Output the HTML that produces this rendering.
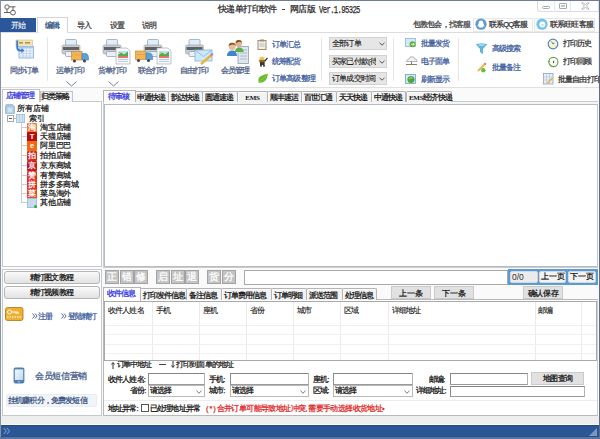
<!DOCTYPE html>
<html><head><meta charset="utf-8">
<style>
*{box-sizing:border-box;margin:0;padding:0}
html,body{width:600px;height:439px;overflow:hidden;background:#fff}
body{position:relative;font-family:"Liberation Sans",sans-serif;font-size:7.5px;color:#111;line-height:1}
.a{position:absolute}
.t{position:absolute;white-space:nowrap;line-height:10px;font-size:7.5px;letter-spacing:-0.85px;-webkit-text-stroke-width:0.25px}
</style></head><body>
<div class="a" style="left:0px;top:0px;width:600px;height:439px;background:#fff"></div>
<div class="a" style="left:0px;top:0px;width:600px;height:1px;background:#6f7d96"></div>
<div class="a" style="left:0px;top:0px;width:1px;height:439px;background:#8593a5"></div>
<div class="a" style="left:599px;top:0px;width:1px;height:439px;background:#5d6d8a"></div>
<div class="a" style="left:598px;top:1px;width:1px;height:436px;background:#eef3f8"></div>
<svg class="a" style="left:3px;top:3px" width="14" height="13" viewBox="0 0 14 13">
 <g fill="none" stroke="#606060" stroke-width="1">
  <circle cx="4" cy="4" r="2.2"/><circle cx="10" cy="9.6" r="2.4"/>
  <path d="M6.2 3.8H12.5M10 3.8V7.2M4 6.2V9.5H7.6M1 9.5H4"/>
 </g></svg>
<div class="t" style="left:218px;top:4px;font-size:9px;letter-spacing:-0.6px;color:#2a2a2a">快递单打印软件</div>
<div class="a" style="left:282px;top:9px;width:3px;height:1px;background:#444"></div>
<div class="t" style="left:290px;top:4px;font-size:9px;letter-spacing:-0.6px;color:#2a2a2a">网店版</div>
<div class="t" style="left:319px;top:5px;font-size:10px;font-family:'Liberation Mono',monospace;transform:scaleX(0.72);transform-origin:0 0;color:#2a2a2a;line-height:12px">Ver.1.95325</div>
<div class="a" style="left:537px;top:1px;width:62px;height:11px;border:1px solid #d9dde3;border-top:none;border-radius:0 0 0 3px;background:#fff"></div>
<div class="a" style="left:554px;top:1px;width:1px;height:11px;background:#e4e7eb"></div>
<div class="a" style="left:570px;top:1px;width:1px;height:11px;background:#e4e7eb"></div>
<div class="a" style="left:542px;top:6px;width:8px;height:3px;border:1px solid #a4a9b2;border-radius:1.5px"></div>
<div class="a" style="left:559px;top:3px;width:8px;height:6px;border:1px solid #a4a9b2;border-radius:1px"></div>
<div class="a" style="left:561px;top:5px;width:4px;height:2px;border:1px solid #c0c4ca"></div>
<svg class="a" style="left:581px;top:2px" width="9" height="8" viewBox="0 0 9 8"><path d="M.8 .8H2.6L4.5 3L6.4 .8H8.2L5.6 4L8.2 7.2H6.4L4.5 5L2.6 7.2H.8L3.4 4Z" fill="#fff" stroke="#a4a9b2" stroke-width=".8"/></svg>
<div class="a" style="left:0px;top:18px;width:36px;height:14px;background:#2b579a"></div>
<div class="t" style="left:11px;top:21px;color:#fff;-webkit-text-stroke-width:0.1px">开始</div>
<div class="a" style="left:37px;top:17px;width:31px;height:16px;background:#fff;border:1px solid #d4d4d4;border-bottom:none"></div>
<div class="t" style="left:45px;top:21px;color:#2f4f80">编辑</div>
<div class="t" style="left:77px;top:21px;color:#444">导入</div>
<div class="t" style="left:110px;top:21px;color:#444">设置</div>
<div class="t" style="left:142px;top:21px;color:#444">说明</div>
<div class="a" style="left:1px;top:32px;width:36px;height:1px;background:#dcdcdc"></div>
<div class="a" style="left:68px;top:32px;width:531px;height:1px;background:#dcdcdc"></div>
<div class="t" style="left:413px;top:20px;color:#444">包教包会，找客服</div>
<div class="a" style="left:473px;top:18px;width:60px;height:14px;border:1px solid #e8e8e8;background:#fcfcfc"></div>
<svg class="a" style="left:475px;top:18px" width="13" height="13" viewBox="0 0 13 13"><circle cx="6" cy="6.2" r="5.6" fill="#5b9ad6"/><path d="M6 2.6Q8.3 2.6 8.4 5.4Q9.6 7.2 9.4 8.6Q8.8 8.4 8.4 7.8Q8.6 9.2 7.6 9.6H4.4Q3.4 9.2 3.6 7.8Q3.2 8.4 2.6 8.6Q2.4 7.2 3.6 5.4Q3.7 2.6 6 2.6Z" fill="#fff"/></svg>
<div class="t" style="left:489px;top:20px;color:#333">联系QQ客服</div>
<div class="a" style="left:534px;top:18px;width:61px;height:14px;border:1px solid #e8e8e8;background:#fcfcfc"></div>
<svg class="a" style="left:536px;top:18px" width="13" height="13" viewBox="0 0 13 13"><circle cx="6" cy="6.2" r="5.6" fill="#72c4ea"/><circle cx="6.4" cy="6.6" r="3" fill="#fff"/><circle cx="6.6" cy="6.8" r="1.1" fill="#a8dcf4"/></svg>
<div class="t" style="left:550px;top:20px;color:#333">联系旺旺客服</div>
<svg width="0" height="0" style="position:absolute"><defs>
 <g id="prn">
  <rect x="3.5" y="0.5" width="11" height="7" rx="1" fill="#dfeefa" stroke="#9aa6b4" stroke-width=".8"/>
  <rect x="0" y="6" width="18" height="9" rx="1.5" fill="#c9cccf" stroke="#9c9fa3" stroke-width=".6"/>
  <rect x="1" y="8" width="16" height="3" fill="#5f6266"/>
  <rect x="3.5" y="12.5" width="11" height="5" rx="1" fill="#e6f1fb" stroke="#8f9aa8" stroke-width=".7"/>
 </g>
 <g id="truck">
  <rect x="0" y="0" width="10.5" height="8.5" fill="#f2b458" stroke="#cf8a2a" stroke-width=".7"/>
  <path d="M1 3.5H9.5" stroke="#e09a3e" stroke-width=".6"/>
  <path d="M10.5 2H15Q17 3.5 17 6V8.5H10.5Z" fill="#5aa3da" stroke="#3a7fb8" stroke-width=".6"/>
  <circle cx="3" cy="9.5" r="1.6" fill="#4a4a4a"/><circle cx="13" cy="9.5" r="1.6" fill="#4a4a4a"/>
 </g>
 <g id="doc">
  <path d="M0 0H11L14 3V16H0Z" fill="#f7f8fb" stroke="#a9aeb8" stroke-width=".7"/>
  <rect x="2" y="3" width="10" height="4" fill="#bfe0f3"/>
  <path d="M2 7L5 4.5L8 6.5L12 3.5V8H2Z" fill="#49b04a"/>
  <circle cx="3.5" cy="4.5" r="1" fill="#f0c83a"/>
  <rect x="2" y="8" width="10" height="2" fill="#e57373"/>
  <path d="M2 11.5H12M2 13.5H12" stroke="#a9c3dc" stroke-width=".8"/>
 </g>
</defs></svg>
<svg class="a" style="left:14px;top:38px" width="22" height="22" viewBox="0 0 22 22">
 <rect x="2" y="2" width="16.5" height="6.5" fill="#f3e2b4" stroke="#d8c08a" stroke-width=".7"/>
 <rect x="5" y="4" width="4" height="1.6" fill="#b09060"/><rect x="11" y="4" width="5" height="1.6" fill="#b09060"/>
 <rect x="5" y="8.5" width="14.5" height="11.5" fill="#eef5fc" stroke="#7fa9d6" stroke-width=".8"/>
 <rect x="5" y="8.5" width="14.5" height="2" fill="#a9c9ea"/>
 <path d="M5 13H19.5M5 15.5H19.5M5 18H19.5M9 10.5V20M12.5 10.5V20M16 10.5V20" stroke="#a8c6e6" stroke-width=".6"/>
 <path d="M3.2 2.5V9.5Q3.2 12.5 6.5 12.5H8" fill="none" stroke="#3a7ccc" stroke-width="1.8"/>
 <path d="M7.5 10L10.5 12.5L7.5 15Z" fill="#3a7ccc"/>
</svg>
<div class="t" style="left:10px;top:66px;color:#4a5b85">同步订单</div>
<div class="a" style="left:47px;top:37px;width:1px;height:44px;background:#e6e6e6"></div>
<svg class="a" style="left:61px;top:38px" width="30" height="26" viewBox="0 0 30 26"><use href="#prn" x="1" y="1"/><use href="#truck" x="10.5" y="13.5"/></svg>
<div class="t" style="left:56px;top:66px;color:#4a5b85">运单打印</div>
<svg class="a" style="left:66px;top:81px" width="11" height="6" viewBox="0 0 11 6"><path d="M.5 .5L5.5 5L10.5 .5" fill="none" stroke="#6f7f99" stroke-width="1"/></svg>
<svg class="a" style="left:102px;top:38px" width="30" height="27" viewBox="0 0 30 27"><use href="#prn" x="1" y="1"/><use href="#doc" x="14" y="10"/></svg>
<div class="t" style="left:98px;top:66px;color:#4a5b85">货单打印</div>
<svg class="a" style="left:108px;top:81px" width="11" height="6" viewBox="0 0 11 6"><path d="M.5 .5L5.5 5L10.5 .5" fill="none" stroke="#6f7f99" stroke-width="1"/></svg>
<svg class="a" style="left:134px;top:38px" width="40" height="27" viewBox="0 0 40 27"><use href="#prn" x="10" y="1"/><use href="#truck" x="1.5" y="13"/><use href="#doc" x="23" y="10"/></svg>
<div class="t" style="left:138px;top:66px;color:#4a5b85">联合打印</div>
<svg class="a" style="left:184px;top:38px" width="31" height="27" viewBox="0 0 31 27">
 <use href="#prn" x="1.5" y="1"/>
 <rect x="11" y="12" width="17" height="11" fill="#cfe8f7" stroke="#7fb3d8" stroke-width=".8"/>
 <path d="M11 12L19.5 18.5L28 12" fill="none" stroke="#7fb3d8" stroke-width=".8"/>
 <path d="M17 26L28 16.5" stroke="#e8b43c" stroke-width="2.4"/>
 <path d="M26.8 17.5L28.8 15.7" stroke="#c77fc0" stroke-width="2.4"/>
</svg>
<div class="t" style="left:180px;top:66px;color:#4a5b85">自由打印</div>
<svg class="a" style="left:225px;top:39px" width="26" height="26" viewBox="0 0 26 26">
 <rect x="13" y="7.5" width="10.5" height="17" fill="#dfe6ee" stroke="#8f9db0" stroke-width=".8"/>
 <path d="M15 11H22M15 14H22M15 17H22M15 20H22" stroke="#9fb0c4" stroke-width=".8"/>
 <circle cx="13.7" cy="4.5" r="3.2" fill="#e0b48a"/><path d="M10.5 4Q11 .5 14 1Q17 1 17 4L16 3Q14 2 11.5 4Z" fill="#8a4a22"/>
 <path d="M10 13Q10 8.5 14 8.5Q18 8.5 18.5 12V13Z" fill="#5cb24a"/>
 <circle cx="7.2" cy="7.5" r="3.5" fill="#e8bd92"/><path d="M3.6 7Q4 3.5 7.2 3.7Q10.5 3.5 10.8 7L9.5 5.8Q7 4.8 5 6.2Z" fill="#8a4a22"/>
 <path d="M2 17Q2 11.5 7.2 11.5Q12 11.5 12 17Z" fill="#3f86d0"/>
</svg>
<div class="t" style="left:221px;top:66px;color:#4a5b85">会员管理</div>
<svg class="a" style="left:257px;top:39px" width="10" height="11" viewBox="0 0 10 11"><rect x="1" y="1.5" width="8" height="9" fill="#f3efe6" stroke="#a58c6a" stroke-width="1"/><rect x="3" y=".5" width="4" height="2" fill="#a58c6a"/><path d="M2.5 5H7.5M2.5 7H7.5" stroke="#9cb0c8" stroke-width=".8"/></svg>
<div class="t" style="left:272px;top:40px;color:#3b5a9c">订单汇总</div>
<svg class="a" style="left:257px;top:56px" width="12" height="11" viewBox="0 0 12 11"><path d="M2 2L5 .5L8 2L5 4.5Z" fill="#f1c04a"/><path d="M1.5 3.5H8.5L7.5 8H3Z" fill="#e0a030"/><path d="M2.5 5H8L10.5 2" stroke="#333" stroke-width="1.2" fill="none"/><rect x="3" y="6" width="4.5" height="3" fill="#3a3a3a"/><circle cx="4" cy="9.8" r="1" fill="#333"/><circle cx="7" cy="9.8" r="1" fill="#333"/></svg>
<div class="t" style="left:272px;top:57px;color:#3b5a9c">统筹配货</div>
<svg class="a" style="left:257px;top:73px" width="12" height="11" viewBox="0 0 12 11"><path d="M1.5 9.5Q0.5 4 5 2.5Q8.5 1 11 .8Q10.5 5 8.5 7.5Q5.5 10.5 1.5 9.5Z" fill="#6cbd2e"/><path d="M2.5 9Q5 6 9 3" stroke="#9ad45a" stroke-width=".6" fill="none"/></svg>
<div class="t" style="left:272px;top:74px;color:#3b5a9c">订单高级整理</div>
<div class="a" style="left:321px;top:38px;width:1px;height:43px;background:#e6e6e6"></div>
<div class="a" style="left:329px;top:37px;width:58px;height:13px;background:#e6e6e6;border:1px solid #d2d2d2"></div>
<div class="t" style="left:332px;top:39px;letter-spacing:-0.8px;color:#111;-webkit-text-stroke-width:0.1px">全部订单</div>
<div class="a" style="left:376px;top:38px;width:10px;height:11px;background:#e6e6e6"></div>
<svg class="a" style="left:379px;top:42px" width="6" height="4" viewBox="0 0 6 4"><path d="M.5 .8L3 3.2L5.5 .8" fill="none" stroke="#444" stroke-width=".9"/></svg>
<div class="a" style="left:329px;top:55px;width:58px;height:13px;background:#e6e6e6;border:1px solid #d2d2d2"></div>
<div class="t" style="left:332px;top:57px;letter-spacing:-0.8px;color:#111;-webkit-text-stroke-width:0.1px">买家已付款(待</div>
<div class="a" style="left:376px;top:56px;width:10px;height:11px;background:#e6e6e6"></div>
<svg class="a" style="left:379px;top:60px" width="6" height="4" viewBox="0 0 6 4"><path d="M.5 .8L3 3.2L5.5 .8" fill="none" stroke="#444" stroke-width=".9"/></svg>
<div class="a" style="left:329px;top:72px;width:58px;height:13px;background:#e6e6e6;border:1px solid #d2d2d2"></div>
<div class="t" style="left:332px;top:74px;letter-spacing:-0.8px;color:#111;-webkit-text-stroke-width:0.1px">订单成交时间.</div>
<div class="a" style="left:376px;top:73px;width:10px;height:11px;background:#e6e6e6"></div>
<svg class="a" style="left:379px;top:77px" width="6" height="4" viewBox="0 0 6 4"><path d="M.5 .8L3 3.2L5.5 .8" fill="none" stroke="#444" stroke-width=".9"/></svg>
<div class="a" style="left:393px;top:38px;width:1px;height:43px;background:#e6e6e6"></div>
<svg class="a" style="left:405px;top:38px" width="12" height="10" viewBox="0 0 12 10"><rect x=".5" y=".5" width="10" height="8" fill="#d6e9f8" stroke="#8cb4d8" stroke-width=".8"/><circle cx="7.5" cy="6.3" r="3" fill="#5bb33a"/><path d="M6 6.3H9M8 5L9.2 6.3L8 7.6" stroke="#fff" stroke-width=".8" fill="none"/></svg>
<div class="t" style="left:421px;top:39px;color:#3b5a9c">批量发货</div>
<svg class="a" style="left:405px;top:56px" width="13" height="10" viewBox="0 0 13 10"><path d="M1.5 5.5Q2 3 4 3Q4.5 .5 7 .7Q9.5 .8 10 3Q12 3 12 5.5Z" fill="#f3f3f3" stroke="#9a9a9a" stroke-width=".7"/><path d="M6.5 5.5V8M1 8.5H12" stroke="#8a7a6a" stroke-width="1"/></svg>
<div class="t" style="left:421px;top:57px;color:#3b5a9c">电子面单</div>
<svg class="a" style="left:405px;top:74px" width="12" height="10" viewBox="0 0 12 10"><rect x=".5" y=".5" width="10" height="9" fill="#d6e9f8" stroke="#6fa0c8" stroke-width=".8"/><circle cx="6" cy="5.5" r="3.6" fill="#4fa83a"/><path d="M4 5Q5 3 7.5 4" stroke="#c8f0b0" stroke-width=".8" fill="none"/></svg>
<div class="t" style="left:421px;top:75px;color:#3b5a9c">刷新显示</div>
<div class="a" style="left:458px;top:38px;width:1px;height:43px;background:#e6e6e6"></div>
<svg class="a" style="left:476px;top:43px" width="11" height="11" viewBox="0 0 11 11"><path d="M.5 1.5Q5.5 0 10.5 1.5L6.5 6V10.5L4.5 9V6Z" fill="#5eb6e4" stroke="#3b93c8" stroke-width=".6"/><ellipse cx="5.5" cy="2" rx="3.5" ry=".8" fill="#bfe6f8"/></svg>
<div class="t" style="left:492px;top:44px;color:#3b5a9c">高级搜索</div>
<svg class="a" style="left:476px;top:62px" width="11" height="11" viewBox="0 0 11 11"><path d="M2 9L9.5 1.5" stroke="#e7b85a" stroke-width="2.2"/><path d="M8.6 2.4L9.8 1.2" stroke="#c98f6a" stroke-width="2.2"/><circle cx="7.3" cy="8.3" r="2.2" fill="#6dbb3a"/></svg>
<div class="t" style="left:492px;top:63px;color:#3b5a9c">批量备注</div>
<svg class="a" style="left:547px;top:38px" width="12" height="12" viewBox="0 0 12 12"><circle cx="6" cy="6" r="4.8" fill="#faf3d2" stroke="#4d86c2" stroke-width="1.2"/><path d="M4.5 3.5L6 6L7.5 5" stroke="#555" stroke-width=".8" fill="none"/></svg>
<div class="t" style="left:563px;top:39px;color:#333">打印历史</div>
<svg class="a" style="left:547px;top:56px" width="12" height="12" viewBox="0 0 12 12"><circle cx="6.4" cy="6" r="4.6" fill="#fbfbf6" stroke="#6d9a52" stroke-width="1.1"/><path d="M.6 6L2 4.2L3.2 6Z" fill="#5aa83a"/><path d="M6 4.5L7.5 6L6 7.5Z" fill="#444"/></svg>
<div class="t" style="left:563px;top:57px;color:#333">打印回顾</div>
<svg class="a" style="left:543px;top:73px" width="11" height="12" viewBox="0 0 11 12"><rect x=".5" y=".5" width="9.5" height="10.5" fill="#e8eef5" stroke="#8da3bc" stroke-width=".8"/><path d="M3.5 1V11M6.5 1V11M1 4H10M1 7H10" stroke="#b5c5d8" stroke-width=".6"/><path d="M4 10.5L9.5 5" stroke="#e4b240" stroke-width="1.4"/></svg>
<div class="t" style="left:558px;top:75px;color:#333">批量自由打印</div>
<div class="a" style="left:1px;top:87px;width:598px;height:1px;background:#e0e0e0"></div>
<div class="a" style="left:1px;top:88px;width:598px;height:328px;background:#fafafa"></div>
<div class="a" style="left:2px;top:101px;width:100px;height:166px;background:#fff;border:1px solid #c3c9ce"></div>
<div class="a" style="left:2px;top:269px;width:100px;height:147px;background:#fff;border:1px solid #c3c9ce"></div>
<div class="a" style="left:40px;top:91px;width:33px;height:11px;background:#f4f4f4;border:1px solid #c4c4c4;border-bottom:none"></div>
<div class="t" style="left:41px;top:92px;color:#111">归类策略</div>
<div class="a" style="left:2px;top:89px;width:38px;height:13px;background:#fff;border:1px solid #c4c4c4;border-bottom:none"></div>
<div class="t" style="left:6px;top:91px;font-size:8px;color:#3a3ae0;-webkit-text-stroke-width:0.3px">店铺管理</div>
<svg class="a" style="left:5px;top:104px" width="10" height="10" viewBox="0 0 10 10"><path d="M.5 2Q.5 .5 2 .5H7.5L9.5 2.5V9.5H.5Z" fill="#a9c8de" stroke="#8fb0c8" stroke-width=".7"/><rect x="2.5" y="3.5" width="5" height="5" fill="#cfe3f1"/></svg>
<div class="t" style="left:17px;top:104px;font-size:8px;letter-spacing:0;color:#1a1a1a">所有店铺</div>
<div class="a" style="left:7px;top:115px;width:7px;height:7px;border:1px solid #a8a8a8;background:#fff"></div>
<div class="a" style="left:9px;top:118px;width:3px;height:1px;background:#555"></div>
<div class="a" style="left:14px;top:118px;width:2px;height:1px;background:#b8b8b8"></div>
<div class="a" style="left:16px;top:114px;width:9px;height:9px;background:#cfe2f2;border:1px solid #a9c6dc"></div>
<div class="a" style="left:19px;top:115px;width:1px;height:7px;background:#b6d0e6"></div>
<div class="a" style="left:22px;top:115px;width:1px;height:7px;background:#b6d0e6"></div>
<div class="t" style="left:29px;top:114px;font-size:8px;letter-spacing:0;color:#1a1a1a">索引</div>
<div class="a" style="left:21px;top:123px;width:1px;height:80px;background:#cdcdcd"></div>
<div class="a" style="left:22px;top:127px;width:5px;height:1px;background:#cdcdcd"></div>
<div class="a" style="left:27px;top:123px;width:10px;height:10px;background:#f07a3a;color:#fff;font-size:7.5px;line-height:10px;text-align:center;font-weight:bold;border-radius:1px">淘</div>
<div class="t" style="left:40px;top:123px;font-size:8px;letter-spacing:-0.25px;color:#1a1a1a">淘宝店铺</div>
<div class="a" style="left:22px;top:136px;width:5px;height:1px;background:#cdcdcd"></div>
<div class="a" style="left:27px;top:132px;width:10px;height:10px;background:#b80c0c;color:#fff;font-size:7.5px;line-height:10px;text-align:center;font-weight:bold;border-radius:1px">T</div>
<div class="t" style="left:40px;top:132px;font-size:8px;letter-spacing:-0.25px;color:#1a1a1a">天猫店铺</div>
<div class="a" style="left:22px;top:145px;width:5px;height:1px;background:#cdcdcd"></div>
<div class="a" style="left:27px;top:141px;width:10px;height:10px;background:#f26a10;color:#fff;font-size:7.5px;line-height:10px;text-align:center;font-weight:bold;border-radius:1px">e</div>
<div class="t" style="left:40px;top:141px;font-size:8px;letter-spacing:-0.25px;color:#1a1a1a">阿里巴巴</div>
<div class="a" style="left:22px;top:155px;width:5px;height:1px;background:#cdcdcd"></div>
<div class="a" style="left:27px;top:151px;width:10px;height:10px;background:#d22a22;color:#fff;font-size:7.5px;line-height:10px;text-align:center;font-weight:bold;border-radius:1px">拍</div>
<div class="t" style="left:40px;top:151px;font-size:8px;letter-spacing:-0.25px;color:#1a1a1a">拍拍店铺</div>
<div class="a" style="left:22px;top:165px;width:5px;height:1px;background:#cdcdcd"></div>
<div class="a" style="left:27px;top:161px;width:10px;height:10px;background:#c8161e;color:#fff;font-size:7.5px;line-height:10px;text-align:center;font-weight:bold;border-radius:1px">京</div>
<div class="t" style="left:40px;top:161px;font-size:8px;letter-spacing:-0.25px;color:#1a1a1a">京东商城</div>
<div class="a" style="left:22px;top:175px;width:5px;height:1px;background:#cdcdcd"></div>
<div class="a" style="left:27px;top:171px;width:10px;height:10px;background:#e0301e;color:#fff;font-size:7.5px;line-height:10px;text-align:center;font-weight:bold;border-radius:1px">赞</div>
<div class="t" style="left:40px;top:171px;font-size:8px;letter-spacing:-0.25px;color:#1a1a1a">有赞商城</div>
<div class="a" style="left:22px;top:184px;width:5px;height:1px;background:#cdcdcd"></div>
<div class="a" style="left:27px;top:180px;width:10px;height:10px;background:#e02e24;color:#fff;font-size:7.5px;line-height:10px;text-align:center;font-weight:bold;border-radius:1px">拼</div>
<div class="t" style="left:40px;top:180px;font-size:8px;letter-spacing:-0.25px;color:#1a1a1a">拼多多商城</div>
<div class="a" style="left:22px;top:193px;width:5px;height:1px;background:#cdcdcd"></div>
<div class="a" style="left:27px;top:189px;width:10px;height:10px;background:#e64a22;color:#fff;font-size:7.5px;line-height:10px;text-align:center;font-weight:bold;border-radius:1px">菜</div>
<div class="t" style="left:40px;top:189px;font-size:8px;letter-spacing:-0.25px;color:#1a1a1a">菜鸟淘外</div>
<div class="a" style="left:22px;top:202px;width:5px;height:1px;background:#cdcdcd"></div>
<div class="a" style="left:27px;top:198px;width:10px;height:10px;background:#c6dcee;border:1px solid #a6c0d6"></div>
<div class="a" style="left:34px;top:205px;width:3px;height:3px;background:#3aa53a;border-radius:50%"></div>
<div class="t" style="left:40px;top:198px;font-size:8px;letter-spacing:-0.25px;color:#1a1a1a">其他店铺</div>
<div class="a" style="left:4px;top:271px;width:96px;height:13px;background:linear-gradient(#fafafa,#e2e2e2);border:1px solid #b5b5b5;border-radius:3px"></div>
<div class="t" style="left:30px;top:273px;color:#111">精打图文教程</div>
<div class="a" style="left:4px;top:286px;width:96px;height:13px;background:linear-gradient(#fafafa,#e2e2e2);border:1px solid #b5b5b5;border-radius:3px"></div>
<div class="t" style="left:30px;top:288px;color:#111">精打视频教程</div>
<svg class="a" style="left:5px;top:307px" width="19" height="14" viewBox="0 0 19 14"><rect x=".5" y=".5" width="17.5" height="13" rx="2" fill="#eeb030" stroke="#b8801a" stroke-width=".9"/><circle cx="4.5" cy="5" r="2" fill="none" stroke="#fff" stroke-width="1"/><path d="M6.5 5H13M11 5V7M13 5V7" stroke="#fff" stroke-width="1"/><path d="M2 10H17" stroke="#fff" stroke-width="1" stroke-dasharray="1.5 1"/></svg>
<svg class="a" style="left:32px;top:313px" width="6" height="6" viewBox="0 0 6 6"><path d="M.5 .5L2.6 3L.5 5.5M3 .5L5.1 3L3 5.5" fill="none" stroke="#3b5a9c" stroke-width=".9"/></svg>
<div class="t" style="left:38px;top:312px;color:#3b5a9c">注册</div>
<svg class="a" style="left:61px;top:313px" width="6" height="6" viewBox="0 0 6 6"><path d="M.5 .5L2.6 3L.5 5.5M3 .5L5.1 3L3 5.5" fill="none" stroke="#3b5a9c" stroke-width=".9"/></svg>
<div class="t" style="left:68px;top:312px;color:#3b5a9c">登陆精打</div>
<svg class="a" style="left:13px;top:367px" width="12" height="17" viewBox="0 0 12 17"><defs><linearGradient id="ph" x1="0" y1="0" x2="1" y2="1"><stop offset="0" stop-color="#f4f9fd"/><stop offset="1" stop-color="#bcd8ee"/></linearGradient></defs><rect x=".6" y=".6" width="10.8" height="15.8" rx="1.8" fill="#4f7fb3"/><rect x="1.8" y="2.4" width="8.4" height="10.6" fill="url(#ph)"/><circle cx="6" cy="14.8" r=".7" fill="#dfe9f4"/></svg>
<div class="t" style="left:35px;top:371px;font-size:8.5px;letter-spacing:-0.35px;color:#3d5688">会员短信营销</div>
<div class="a" style="left:6px;top:394px;width:91px;height:13px;background:#f1f5f9;border:1px solid #e8edf2;border-radius:2px"></div>
<div class="t" style="left:8px;top:396px;color:#34507e">挂机赚积分，免费发短信</div>
<div class="a" style="left:103px;top:101px;width:495px;height:167px;background:#f4f4f4;border:1px solid #c6ccd0;border-right:none"></div>
<div class="a" style="left:104px;top:104px;width:494px;height:163px;background:#fff;border:1px solid #b8bcc0;border-right-color:#c0c8d2"></div>
<div class="a" style="left:134px;top:91px;width:35px;height:11px;background:#f2f2f2;border:1px solid #b4b4b4;border-bottom:none;border-radius:2px 2px 0 0;box-shadow:inset 1px 1px 0 #fcfcfc"></div>
<div class="a" style="left:168px;top:91px;width:35px;height:11px;background:#f2f2f2;border:1px solid #b4b4b4;border-bottom:none;border-radius:2px 2px 0 0;box-shadow:inset 1px 1px 0 #fcfcfc"></div>
<div class="a" style="left:202px;top:91px;width:36px;height:11px;background:#f2f2f2;border:1px solid #b4b4b4;border-bottom:none;border-radius:2px 2px 0 0;box-shadow:inset 1px 1px 0 #fcfcfc"></div>
<div class="a" style="left:237px;top:91px;width:31px;height:11px;background:#f2f2f2;border:1px solid #b4b4b4;border-bottom:none;border-radius:2px 2px 0 0;box-shadow:inset 1px 1px 0 #fcfcfc"></div>
<div class="a" style="left:267px;top:91px;width:35px;height:11px;background:#f2f2f2;border:1px solid #b4b4b4;border-bottom:none;border-radius:2px 2px 0 0;box-shadow:inset 1px 1px 0 #fcfcfc"></div>
<div class="a" style="left:301px;top:91px;width:36px;height:11px;background:#f2f2f2;border:1px solid #b4b4b4;border-bottom:none;border-radius:2px 2px 0 0;box-shadow:inset 1px 1px 0 #fcfcfc"></div>
<div class="a" style="left:336px;top:91px;width:36px;height:11px;background:#f2f2f2;border:1px solid #b4b4b4;border-bottom:none;border-radius:2px 2px 0 0;box-shadow:inset 1px 1px 0 #fcfcfc"></div>
<div class="a" style="left:371px;top:91px;width:35px;height:11px;background:#f2f2f2;border:1px solid #b4b4b4;border-bottom:none;border-radius:2px 2px 0 0;box-shadow:inset 1px 1px 0 #fcfcfc"></div>
<div class="a" style="left:406px;top:91px;width:46px;height:11px;background:#f2f2f2;border:1px solid #b4b4b4;border-bottom:none;border-radius:2px 2px 0 0;box-shadow:inset 1px 1px 0 #fcfcfc"></div>
<div class="t" style="left:137px;top:93px;color:#111">申通快递</div>
<div class="t" style="left:171px;top:93px;color:#111">韵达快递</div>
<div class="t" style="left:205px;top:93px;color:#111">圆通速递</div>
<div class="t" style="left:237px;top:93px;width:31px;text-align:center;font-size:7px;font-family:'Liberation Serif',serif;font-weight:bold;letter-spacing:-0.2px;color:#111;-webkit-text-stroke-width:0">EMS</div>
<div class="t" style="left:270px;top:93px;color:#111">顺丰速运</div>
<div class="t" style="left:304px;top:93px;color:#111">百世汇通</div>
<div class="t" style="left:339px;top:93px;color:#111">天天快递</div>
<div class="t" style="left:374px;top:93px;color:#111">中通快递</div>
<div class="t" style="left:409px;top:93px;color:#111"><span style="font-size:7px;font-family:Liberation Serif,serif;font-weight:bold;letter-spacing:-.3px;-webkit-text-stroke-width:0">EMS</span>经济快递</div>
<div class="a" style="left:103px;top:90px;width:33px;height:12px;background:#fcfcfc;border:1px solid #b4b4b4;border-bottom:none"></div>
<div class="a" style="left:104px;top:101px;width:31px;height:3px;background:#fcfcfc"></div>
<div class="t" style="left:108px;top:92px;font-size:7.5px;color:#3a3ae0;-webkit-text-stroke-width:0.3px">待审核</div>
<div class="a" style="left:105px;top:270px;width:14px;height:14px;background:#c4c4c4;border:1px solid #a2a2a2;color:#fafafa;font-size:9.5px;line-height:12px;text-align:center;font-weight:bold">正</div>
<div class="a" style="left:120px;top:270px;width:14px;height:14px;background:#c4c4c4;border:1px solid #a2a2a2;color:#fafafa;font-size:9.5px;line-height:12px;text-align:center;font-weight:bold">错</div>
<div class="a" style="left:134px;top:270px;width:14px;height:14px;background:#c4c4c4;border:1px solid #a2a2a2;color:#fafafa;font-size:9.5px;line-height:12px;text-align:center;font-weight:bold">修</div>
<div class="a" style="left:156px;top:270px;width:14px;height:14px;background:#c4c4c4;border:1px solid #a2a2a2;color:#fafafa;font-size:9.5px;line-height:12px;text-align:center;font-weight:bold">启</div>
<div class="a" style="left:171px;top:270px;width:14px;height:14px;background:#c4c4c4;border:1px solid #a2a2a2;color:#fafafa;font-size:9.5px;line-height:12px;text-align:center;font-weight:bold">址</div>
<div class="a" style="left:185px;top:270px;width:14px;height:14px;background:#c4c4c4;border:1px solid #a2a2a2;color:#fafafa;font-size:9.5px;line-height:12px;text-align:center;font-weight:bold">退</div>
<div class="a" style="left:207px;top:270px;width:14px;height:14px;background:#c4c4c4;border:1px solid #a2a2a2;color:#fafafa;font-size:9.5px;line-height:12px;text-align:center;font-weight:bold">货</div>
<div class="a" style="left:222px;top:270px;width:14px;height:14px;background:#c4c4c4;border:1px solid #a2a2a2;color:#fafafa;font-size:9.5px;line-height:12px;text-align:center;font-weight:bold">分</div>
<div class="a" style="left:244px;top:270px;width:264px;height:15px;background:#fff;border:1px solid #a9a9a9"></div>
<div class="a" style="left:508px;top:269px;width:90px;height:16px;background:#5b9bd5"></div>
<div class="a" style="left:510px;top:271px;width:28px;height:12px;background:#ebebeb;border:1px solid #d6d6d6;border-radius:2px"></div>
<div class="t" style="left:512px;top:272px;font-size:8.5px;letter-spacing:0;color:#333;-webkit-text-stroke-width:0">0/0</div>
<div class="a" style="left:539px;top:271px;width:27px;height:12px;background:#f3f3f3;border:1px solid #d6d6d6;border-radius:2px"></div>
<div class="t" style="left:541px;top:272px;font-size:8px;letter-spacing:-0.2px;color:#111">上一页</div>
<div class="a" style="left:568px;top:271px;width:28px;height:12px;background:#f3f3f3;border:1px solid #d6d6d6;border-radius:2px"></div>
<div class="t" style="left:570px;top:272px;font-size:8px;letter-spacing:-0.2px;color:#111">下一页</div>
<div class="a" style="left:103px;top:299px;width:495px;height:117px;background:#fff;border:1px solid #b9b9b9;border-right-color:#c8d0d8"></div>
<div class="a" style="left:140px;top:288px;width:47px;height:12px;background:#f2f2f2;border:1px solid #b4b4b4;border-bottom:none;border-radius:2px 2px 0 0;box-shadow:inset 1px 1px 0 #fcfcfc"></div>
<div class="a" style="left:186px;top:288px;width:36px;height:12px;background:#f2f2f2;border:1px solid #b4b4b4;border-bottom:none;border-radius:2px 2px 0 0;box-shadow:inset 1px 1px 0 #fcfcfc"></div>
<div class="a" style="left:221px;top:288px;width:51px;height:12px;background:#f2f2f2;border:1px solid #b4b4b4;border-bottom:none;border-radius:2px 2px 0 0;box-shadow:inset 1px 1px 0 #fcfcfc"></div>
<div class="a" style="left:271px;top:288px;width:36px;height:12px;background:#f2f2f2;border:1px solid #b4b4b4;border-bottom:none;border-radius:2px 2px 0 0;box-shadow:inset 1px 1px 0 #fcfcfc"></div>
<div class="a" style="left:306px;top:288px;width:37px;height:12px;background:#f2f2f2;border:1px solid #b4b4b4;border-bottom:none;border-radius:2px 2px 0 0;box-shadow:inset 1px 1px 0 #fcfcfc"></div>
<div class="a" style="left:342px;top:288px;width:35px;height:12px;background:#f2f2f2;border:1px solid #b4b4b4;border-bottom:none;border-radius:2px 2px 0 0;box-shadow:inset 1px 1px 0 #fcfcfc"></div>
<div class="t" style="left:143px;top:291px;letter-spacing:-1px;color:#111">打印发件信息</div>
<div class="t" style="left:189px;top:291px;letter-spacing:-1px;color:#111">备注信息</div>
<div class="t" style="left:224px;top:291px;letter-spacing:-1px;color:#111">订单费用信息</div>
<div class="t" style="left:274px;top:291px;letter-spacing:-1px;color:#111">订单明细</div>
<div class="t" style="left:309px;top:291px;letter-spacing:-1px;color:#111">派送范围</div>
<div class="t" style="left:345px;top:291px;letter-spacing:-1px;color:#111">处理信息</div>
<div class="a" style="left:103px;top:287px;width:38px;height:14px;background:#fff;border:1px solid #b4b4b4;border-bottom:none"></div>
<div class="t" style="left:107px;top:289px;color:#3a3ae0;-webkit-text-stroke-width:0.3px">收件信息</div>
<div class="a" style="left:391px;top:286px;width:40px;height:13px;background:#e1e1e1;border:1px solid #cacaca"></div>
<div class="t" style="left:391px;top:289px;width:40px;text-align:center;letter-spacing:-0.3px;color:#111">上一条</div>
<div class="a" style="left:434px;top:286px;width:40px;height:13px;background:#e1e1e1;border:1px solid #cacaca"></div>
<div class="t" style="left:434px;top:289px;width:40px;text-align:center;letter-spacing:-0.3px;color:#111">下一条</div>
<div class="a" style="left:523px;top:286px;width:40px;height:13px;background:#e1e1e1;border:1px solid #cacaca"></div>
<div class="t" style="left:523px;top:289px;width:40px;text-align:center;letter-spacing:-0.3px;color:#111">确认保存</div>
<div class="a" style="left:104px;top:301px;width:493px;height:60px;background:#fff;border:1px solid #a9a9a9"></div>
<div class="a" style="left:152px;top:302px;width:1px;height:58px;background:#ebebeb"></div>
<div class="a" style="left:199px;top:302px;width:1px;height:58px;background:#ebebeb"></div>
<div class="a" style="left:246px;top:302px;width:1px;height:58px;background:#ebebeb"></div>
<div class="a" style="left:293px;top:302px;width:1px;height:58px;background:#ebebeb"></div>
<div class="a" style="left:340px;top:302px;width:1px;height:58px;background:#ebebeb"></div>
<div class="a" style="left:388px;top:302px;width:1px;height:58px;background:#ebebeb"></div>
<div class="a" style="left:535px;top:302px;width:1px;height:58px;background:#ebebeb"></div>
<div class="a" style="left:581px;top:302px;width:1px;height:58px;background:#ebebeb"></div>
<div class="a" style="left:105px;top:325px;width:491px;height:1px;background:#f0f0f0"></div>
<div class="a" style="left:105px;top:334px;width:491px;height:1px;background:#f0f0f0"></div>
<div class="a" style="left:105px;top:344px;width:491px;height:1px;background:#f0f0f0"></div>
<div class="a" style="left:105px;top:353px;width:491px;height:1px;background:#f0f0f0"></div>
<div class="t" style="left:108px;top:306px;color:#111;-webkit-text-stroke-width:0.1px">收件人姓名</div>
<div class="t" style="left:156px;top:306px;color:#111;-webkit-text-stroke-width:0.1px">手机</div>
<div class="t" style="left:203px;top:306px;color:#111;-webkit-text-stroke-width:0.1px">座机</div>
<div class="t" style="left:250px;top:306px;color:#111;-webkit-text-stroke-width:0.1px">省份</div>
<div class="t" style="left:297px;top:306px;color:#111;-webkit-text-stroke-width:0.1px">城市</div>
<div class="t" style="left:344px;top:306px;color:#111;-webkit-text-stroke-width:0.1px">区域</div>
<div class="t" style="left:392px;top:306px;color:#111;-webkit-text-stroke-width:0.1px">详细地址</div>
<div class="t" style="left:538px;top:306px;color:#111;-webkit-text-stroke-width:0.1px">邮编</div>
<div class="a" style="left:104px;top:361px;width:140px;height:8px;overflow:hidden"><svg class="a" style="left:7px;top:1px" width="4" height="7" viewBox="0 0 4 7"><path d="M2 7V1M.5 2.5L2 .5L3.5 2.5" fill="none" stroke="#333" stroke-width="1"/></svg><div class="t" style="left:12.5px;top:-1.5px;letter-spacing:-1.1px;color:#222">订单中地址</div><div class="a" style="left:55px;top:3px;width:7px;height:1px;background:#444"></div><svg class="a" style="left:67px;top:0" width="4" height="7" viewBox="0 0 4 7"><path d="M2 0V6M.5 4.5L2 6.5L3.5 4.5" fill="none" stroke="#333" stroke-width="1"/></svg><div class="t" style="left:72px;top:-1.5px;color:#222">打印到面单的地址</div></div>
<div class="t" style="left:108px;top:375px;">收件人姓名:</div>
<div class="a" style="left:148px;top:373px;width:57px;height:12px;background:#fff;border:1px solid;border-color:#858585 #b4b4b4 #9a9a9a #8c8c8c"></div>
<div class="t" style="left:130px;top:386px;">省份:</div>
<div class="a" style="left:148px;top:385px;width:57px;height:12px;background:#fff;border:1px solid #b8b8b8"></div>
<div class="t" style="left:150px;top:386px;color:#111">请选择</div>
<svg class="a" style="left:196px;top:390px" width="6" height="4" viewBox="0 0 6 4"><path d="M.5 .8L3 3.2L5.5 .8" fill="none" stroke="#555" stroke-width=".8"/></svg>
<div class="t" style="left:209px;top:375px;">手机:</div>
<div class="a" style="left:230px;top:373px;width:79px;height:12px;background:#fff;border:1px solid;border-color:#858585 #b4b4b4 #9a9a9a #8c8c8c"></div>
<div class="t" style="left:209px;top:386px;">城市:</div>
<div class="a" style="left:230px;top:385px;width:79px;height:12px;background:#fff;border:1px solid #b8b8b8"></div>
<div class="t" style="left:232px;top:386px;color:#111">请选择</div>
<svg class="a" style="left:300px;top:390px" width="6" height="4" viewBox="0 0 6 4"><path d="M.5 .8L3 3.2L5.5 .8" fill="none" stroke="#555" stroke-width=".8"/></svg>
<div class="t" style="left:313px;top:375px;">座机:</div>
<div class="a" style="left:333px;top:373px;width:80px;height:12px;background:#fff;border:1px solid;border-color:#858585 #b4b4b4 #9a9a9a #8c8c8c"></div>
<div class="t" style="left:313px;top:386px;">区域:</div>
<div class="a" style="left:333px;top:385px;width:80px;height:12px;background:#fff;border:1px solid #b8b8b8"></div>
<div class="t" style="left:335px;top:386px;color:#111">请选择</div>
<svg class="a" style="left:404px;top:390px" width="6" height="4" viewBox="0 0 6 4"><path d="M.5 .8L3 3.2L5.5 .8" fill="none" stroke="#555" stroke-width=".8"/></svg>
<div class="t" style="left:429px;top:375px;">邮编:</div>
<div class="a" style="left:450px;top:373px;width:78px;height:12px;background:#fff;border:1px solid;border-color:#858585 #b4b4b4 #9a9a9a #8c8c8c"></div>
<div class="a" style="left:531px;top:372px;width:53px;height:13px;background:#e1e1e1;border:1px solid #cacaca"></div>
<div class="t" style="left:531px;top:374px;width:53px;text-align:center;letter-spacing:-0.5px">地图查询</div>
<div class="t" style="left:416px;top:386px;">详细地址:</div>
<div class="a" style="left:450px;top:386px;width:135px;height:11px;background:#fff;border:1px solid;border-color:#858585 #b4b4b4 #9a9a9a #8c8c8c"></div>
<div class="a" style="left:104px;top:400px;width:493px;height:1px;background:#ececec"></div>
<div class="t" style="left:108px;top:404px;">地址异常:</div>
<div class="a" style="left:141px;top:404px;width:8px;height:8px;background:#fff;border:1px solid #555"></div>
<div class="t" style="left:150px;top:404px;">已处理地址异常</div>
<div class="t" style="left:206px;top:404px;letter-spacing:-0.62px;color:#e02020"><span style="letter-spacing:1px">(<span style="font-size:7px">*</span>)</span>合并订单可能导致地址冲突, 需要手动选择收货地址•</div>
<div class="a" style="left:1px;top:416px;width:598px;height:8px;background:#eeeeec"></div>
<div class="a" style="left:1px;top:424px;width:598px;height:1px;background:#fdfdfd"></div>
<div class="a" style="left:1px;top:425px;width:598px;height:1px;background:#244a86"></div>
<div class="a" style="left:1px;top:426px;width:598px;height:10px;background:#2b5797"></div>
<div class="a" style="left:1px;top:436px;width:598px;height:1px;background:#284f8e"></div>
<div class="a" style="left:0px;top:437px;width:600px;height:2px;background:#5a74a0"></div>
<svg class="a" style="left:3px;top:427px" width="8" height="8" viewBox="0 0 8 8"><path d="M.8 1L3.3 4L.8 7M4 1L6.5 4L4 7" fill="none" stroke="#7ea6d8" stroke-width="1"/></svg>
<svg class="a" style="left:588px;top:427px" width="10" height="10" viewBox="0 0 10 10"><path d="M9 1V9H1Z" fill="#7b97c4"/></svg>
</body></html>
